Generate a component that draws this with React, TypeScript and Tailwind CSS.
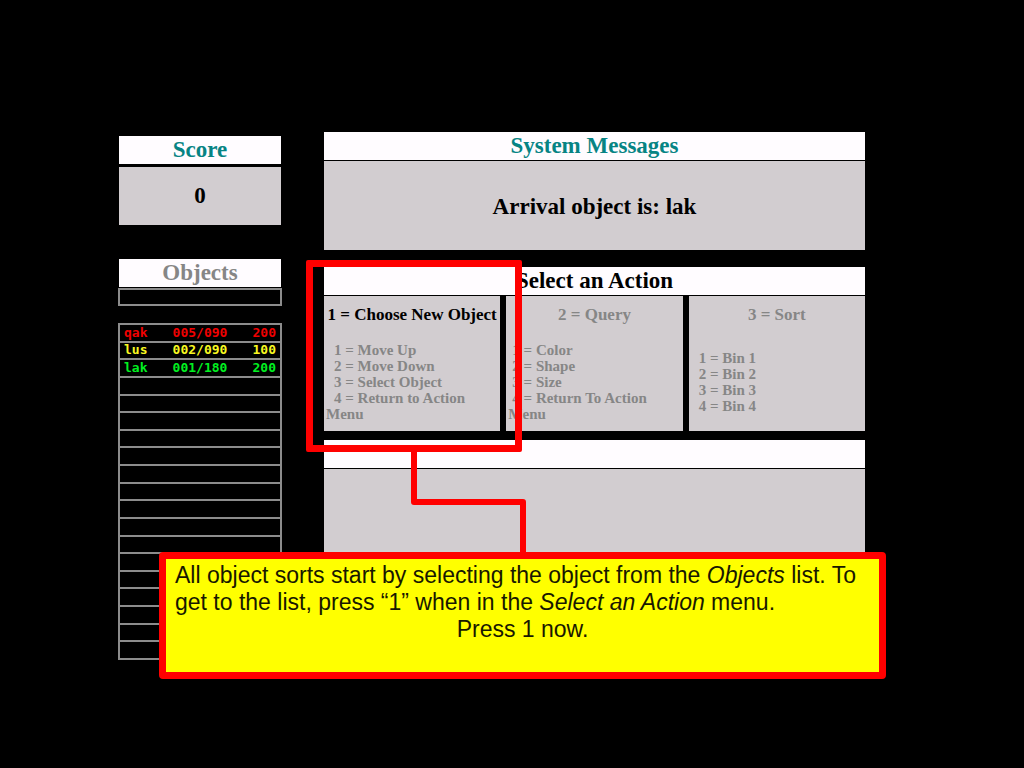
import type { ReactNode } from "react";

type TrackedObject = {
  name: string;
  position: string;
  value: string;
  color: string;
};

const objects: TrackedObject[] = [
  { name: "qak", position: "005/090", value: "200", color: "text-[#f00000]" },
  { name: "lus", position: "002/090", value: "100", color: "text-[#f8f820]" },
  { name: "lak", position: "001/180", value: "200", color: "text-[#00f020]" },
];

const ROW_COUNT = 19;

function TitleBar({ children, color }: { children?: ReactNode; color: string }) {
  return (
    <h2
      className={`flex h-7 items-center justify-center bg-[#fffcff] text-[23px] leading-7 font-bold ${color}`}
    >
      {children}
    </h2>
  );
}

function ActionPanel({
  title,
  items,
  active = false,
  listClass,
}: {
  title: string;
  items: string[];
  active?: boolean;
  listClass: string;
}) {
  return (
    <section className="h-[135px] flex-1 bg-[#d2cdd0] pt-[7px]">
      <h3
        className={`text-center text-[17px] leading-6 font-bold whitespace-nowrap ${active ? "text-black" : "text-[#868686]"}`}
      >
        {title}
      </h3>
      <ol className={`text-[15px] leading-4 font-bold text-[#868686] ${listClass}`}>
        {items.map((item) => (
          <li key={item}>{item}</li>
        ))}
      </ol>
    </section>
  );
}

function ObjectsTable() {
  return (
    <table
      aria-label="Objects"
      className="mt-[17px] h-[337px] w-full table-fixed border-collapse border-2 border-[#8c8c8c] font-['DejaVu_Sans_Mono',monospace] text-[13px] leading-[14px] font-bold"
    >
      <tbody>
        {Array.from({ length: ROW_COUNT }, (_, i) => {
          const o = objects[i];
          return (
            <tr key={i} className={`h-4 border-2 border-[#8c8c8c] ${o ? o.color : ""}`}>
              <td className="w-1/4 p-0 pl-1">{o?.name}</td>
              <td className="p-0 text-center">{o?.position}</td>
              <td className="w-1/4 p-0 pr-1 text-right">{o?.value}</td>
            </tr>
          );
        })}
      </tbody>
    </table>
  );
}

export default function App() {
  return (
    <main className="min-h-screen bg-black pt-[132px] pr-[159px] pb-[88px] pl-[118px] font-['Liberation_Serif',serif]">
      <div className="relative flex gap-[42px]">
        <aside className="w-[164px] shrink-0 pt-1">
          <section className="px-px">
            <TitleBar color="text-[#078484]">Score</TitleBar>
            <p className="mt-[3px] flex h-[58px] items-center justify-center bg-[#d2cdd0] text-[23px] font-bold">
              0
            </p>
          </section>
          <section className="mt-[34px]">
            <div className="px-px">
              <TitleBar color="text-[#868686]">Objects</TitleBar>
            </div>
            <div className="mt-px h-[18px] border-2 border-[#8c8c8c]" />
            <ObjectsTable />
          </section>
        </aside>

        <div className="relative min-w-0 flex-1">
          <section>
            <TitleBar color="text-[#078484]">System Messages</TitleBar>
            <p className="mt-px flex h-[89px] items-center justify-center bg-[#d2cdd0] pt-[3px] text-[23px] font-bold">
              Arrival object is: lak
            </p>
          </section>

          <section className="mt-[17px]">
            <TitleBar color="text-black">Select an Action</TitleBar>
            <div className="mt-px flex gap-[6px]">
              <ActionPanel
                active
                title="1 = Choose New Object"
                listClass="mt-[15px] pl-[2px] [&>li]:indent-2"
                items={["1 = Move Up", "2 = Move Down", "3 = Select Object", "4 = Return to Action Menu"]}
              />
              <ActionPanel
                title="2 = Query"
                listClass="mt-[15px] pl-[2px] [&>li]:indent-1"
                items={["1 = Color", "2 = Shape", "3 = Size", "4 = Return To Action Menu"]}
              />
              <ActionPanel
                title="3 = Sort"
                listClass="mt-[23px] pl-[2px] [&>li]:indent-2"
                items={["1 = Bin 1", "2 = Bin 2", "3 = Bin 3", "4 = Bin 4"]}
              />
            </div>
          </section>

          <section className="mt-[9px]">
            <TitleBar color="text-black" />
            <div className="mt-px h-[120px] bg-[#d2cdd0]" />
          </section>

          <div className="absolute top-32 left-[-18px] h-48 w-[216px] rounded-[2px] border-[7px] border-[#ff0000]" />
          <svg
            aria-hidden="true"
            className="absolute top-[318px] left-[86px]"
            width="117"
            height="104"
            fill="none"
            stroke="#ff0000"
            strokeWidth="6"
            strokeLinejoin="round"
          >
            <path d="M4 0V52H113V104" />
          </svg>
        </div>

        <aside className="absolute top-[420px] right-[-21px] left-[41px] h-[127px] rounded border-[7px] border-[#ff0000] bg-[#ffff00] px-[9px] pt-[3px] font-['Liberation_Sans',sans-serif] text-[23px] leading-[27px] text-[#181800]">
          <p>
            All object sorts start by selecting the object from the <em>Objects</em> list. To get to
            the list, press “1” when in the <em>Select an Action</em> menu.
          </p>
          <p className="text-center">Press 1 now.</p>
        </aside>
      </div>
    </main>
  );
}
